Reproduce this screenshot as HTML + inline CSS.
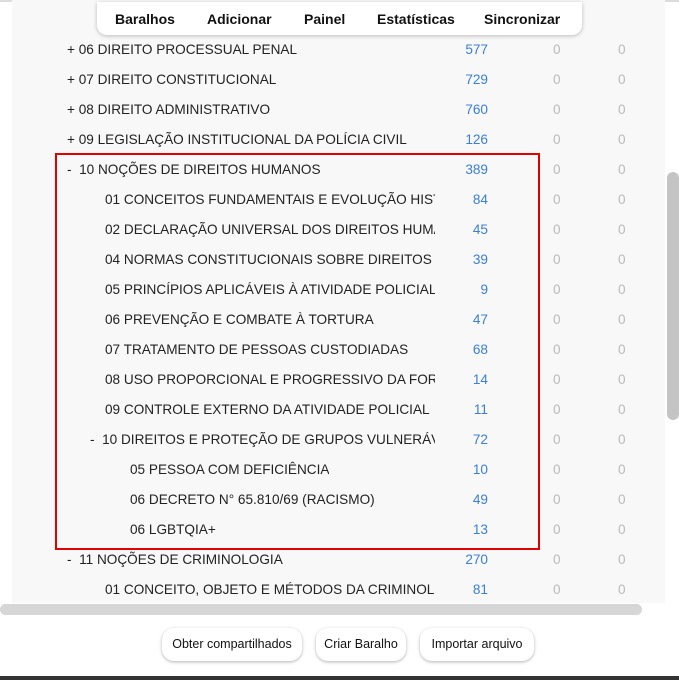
<!DOCTYPE html><html><head><style>
*{margin:0;padding:0;box-sizing:border-box}
body{width:679px;height:680px;background:#fff;font-family:"Liberation Sans",sans-serif;position:relative;overflow:hidden}
.panel{position:absolute;left:12px;top:0;width:653px;height:603px;background:#f8f8f8}
.nav{position:absolute;left:97px;top:2px;width:485px;height:33px;background:#fff;border-radius:0 0 10px 10px;box-shadow:0 1px 4px rgba(0,0,0,.25);display:flex;align-items:center;font-weight:bold;font-size:14px;color:#111}
.nav span{position:absolute}
.row{position:absolute;left:0;height:30px;width:660px;font-size:13.6px;color:#222;line-height:30px}
.row .t{position:absolute;white-space:nowrap;overflow:hidden}
.row .n{position:absolute;right:172px;color:#3b7fd4;text-align:right}
.row .z1{position:absolute;left:553px;color:#bbb}
.row .z2{position:absolute;left:618px;color:#bbb}
.red{position:absolute;left:55px;top:153px;width:485px;height:397px;border:2px solid #e00000}
.hs{position:absolute;left:0;top:604px;width:642px;height:11px;background:#d6d6d6;border-radius:6px}
.vs{position:absolute;left:667px;top:172px;width:12px;height:248px;background:#c4c4c4;border-radius:6px}
.btn{position:absolute;top:628px;height:33px;background:#fff;border-radius:12px;box-shadow:0 1px 3px rgba(0,0,0,.3);font-size:12.5px;line-height:33px;text-align:center;color:#111}
.bot{position:absolute;left:0;top:676px;width:679px;height:4px;background:#333}
.top{position:absolute;left:0;top:0;width:679px;height:2px;background:#ddd}
</style></head><body>
<div class="top"></div>
<div class="panel"></div>
<div class="nav"><span style="left:18px">Baralhos</span><span style="left:110px">Adicionar</span><span style="left:207px">Painel</span><span style="left:280px">Estatísticas</span><span style="left:387px">Sincronizar</span></div>

<div class="row" style="top:35px"><span class="t" style="left:67px">+ 06 DIREITO PROCESSUAL PENAL</span><span class="n">577</span><span class="z1">0</span><span class="z2">0</span></div>
<div class="row" style="top:65px"><span class="t" style="left:67px">+ 07 DIREITO CONSTITUCIONAL</span><span class="n">729</span><span class="z1">0</span><span class="z2">0</span></div>
<div class="row" style="top:95px"><span class="t" style="left:67px">+ 08 DIREITO ADMINISTRATIVO</span><span class="n">760</span><span class="z1">0</span><span class="z2">0</span></div>
<div class="row" style="top:125px"><span class="t" style="left:67px">+ 09 LEGISLAÇÃO INSTITUCIONAL DA POLÍCIA CIVIL</span><span class="n">126</span><span class="z1">0</span><span class="z2">0</span></div>
<div class="row" style="top:155px"><span class="t" style="left:67px">-&nbsp; 10 NOÇÕES DE DIREITOS HUMANOS</span><span class="n">389</span><span class="z1">0</span><span class="z2">0</span></div>
<div class="row" style="top:185px"><span class="t" style="left:105px;width:330px">01 CONCEITOS FUNDAMENTAIS E EVOLUÇÃO HISTÓRICA</span><span class="n">84</span><span class="z1">0</span><span class="z2">0</span></div>
<div class="row" style="top:215px"><span class="t" style="left:105px;width:330px">02 DECLARAÇÃO UNIVERSAL DOS DIREITOS HUMANOS</span><span class="n">45</span><span class="z1">0</span><span class="z2">0</span></div>
<div class="row" style="top:245px"><span class="t" style="left:105px;width:330px">04 NORMAS CONSTITUCIONAIS SOBRE DIREITOS</span><span class="n">39</span><span class="z1">0</span><span class="z2">0</span></div>
<div class="row" style="top:275px"><span class="t" style="left:105px;width:330px">05 PRINCÍPIOS APLICÁVEIS À ATIVIDADE POLICIAL</span><span class="n">9</span><span class="z1">0</span><span class="z2">0</span></div>
<div class="row" style="top:305px"><span class="t" style="left:105px;width:330px">06 PREVENÇÃO E COMBATE À TORTURA</span><span class="n">47</span><span class="z1">0</span><span class="z2">0</span></div>
<div class="row" style="top:335px"><span class="t" style="left:105px;width:330px">07 TRATAMENTO DE PESSOAS CUSTODIADAS</span><span class="n">68</span><span class="z1">0</span><span class="z2">0</span></div>
<div class="row" style="top:365px"><span class="t" style="left:105px;width:330px">08 USO PROPORCIONAL E PROGRESSIVO DA FORÇA</span><span class="n">14</span><span class="z1">0</span><span class="z2">0</span></div>
<div class="row" style="top:395px"><span class="t" style="left:105px;width:330px">09 CONTROLE EXTERNO DA ATIVIDADE POLICIAL</span><span class="n">11</span><span class="z1">0</span><span class="z2">0</span></div>
<div class="row" style="top:425px"><span class="t" style="left:90px;width:345px">-&nbsp; 10 DIREITOS E PROTEÇÃO DE GRUPOS VULNERÁVEIS</span><span class="n">72</span><span class="z1">0</span><span class="z2">0</span></div>
<div class="row" style="top:455px"><span class="t" style="left:130px">05 PESSOA COM DEFICIÊNCIA</span><span class="n">10</span><span class="z1">0</span><span class="z2">0</span></div>
<div class="row" style="top:485px"><span class="t" style="left:130px">06 DECRETO N° 65.810/69 (RACISMO)</span><span class="n">49</span><span class="z1">0</span><span class="z2">0</span></div>
<div class="row" style="top:515px"><span class="t" style="left:130px">06 LGBTQIA+</span><span class="n">13</span><span class="z1">0</span><span class="z2">0</span></div>
<div class="row" style="top:545px"><span class="t" style="left:67px">-&nbsp; 11 NOÇÕES DE CRIMINOLOGIA</span><span class="n">270</span><span class="z1">0</span><span class="z2">0</span></div>
<div class="row" style="top:575px"><span class="t" style="left:105px;width:330px">01 CONCEITO, OBJETO E MÉTODOS DA CRIMINOLOGIA</span><span class="n">81</span><span class="z1">0</span><span class="z2">0</span></div>

<div class="red"></div>
<div class="hs"></div>
<div class="vs"></div>
<div class="btn" style="left:162px;width:140px">Obter compartilhados</div>
<div class="btn" style="left:316px;width:90px">Criar Baralho</div>
<div class="btn" style="left:420px;width:114px">Importar arquivo</div>
<div class="bot"></div>
</body></html>
